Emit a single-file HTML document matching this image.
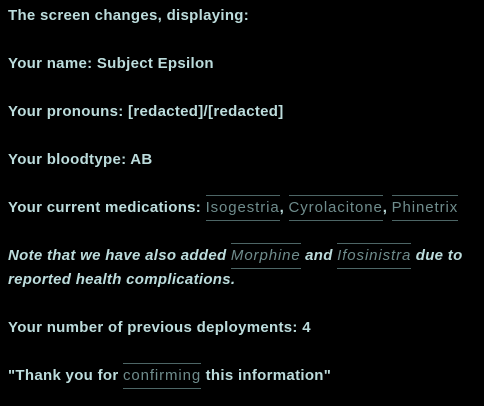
<!DOCTYPE html>
<html><head><meta charset="utf-8"><style>
html,body{margin:0;padding:0;background:#000;}
body{width:484px;height:406px;overflow:hidden;color:#bcdcdc;font-family:"Liberation Sans","DejaVu Sans",sans-serif;font-size:15px;font-weight:bold;line-height:24px;padding:4px 8px 0 8px;box-sizing:border-box;letter-spacing:0.3px;}
p{margin:0 0 24px 0;white-space:nowrap;}
.i{font-style:italic;}
a{display:inline-block;color:#6f8c8c;text-decoration:none;border-top:1px solid #4d6666;border-bottom:1px solid #4d6666;line-height:24px;vertical-align:top;margin:-1px 0;font-weight:normal;letter-spacing:0.9px;}
</style></head><body>
<p>The screen changes, displaying:</p>
<p>Your name: Subject Epsilon</p>
<p>Your pronouns: [redacted]/[redacted]</p>
<p>Your bloodtype: AB</p>
<p>Your current medications: <a>Isogestria</a>, <a>Cyrolacitone</a>, <a>Phinetrix</a></p>
<p class="i">Note that we have also added <a>Morphine</a> and <a>Ifosinistra</a> due to<br>reported health complications.</p>
<p>Your number of previous deployments: 4</p>
<p>"Thank you for <a>confirming</a> this information"</p>
</body></html>
